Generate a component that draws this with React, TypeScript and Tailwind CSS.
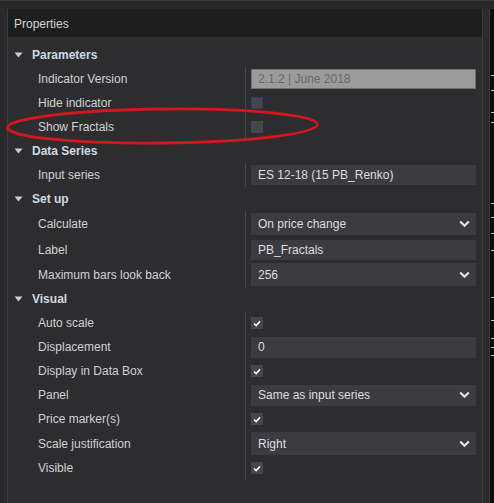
import React from "react";

type Row =
  | { kind: "section"; label: string; h: number }
  | { kind: "disabled"; label: string; value: string; h: number }
  | { kind: "check"; label: string; checked: boolean; focus?: boolean; h: number }
  | { kind: "input"; label: string; value: string; h: number; fh: number }
  | { kind: "select"; label: string; value: string; h: number; fh: number };

const rows: Row[] = [
  { kind: "section", label: "Parameters", h: 24 },
  { kind: "disabled", label: "Indicator Version", value: "2.1.2 | June 2018", h: 24 },
  { kind: "check", label: "Hide indicator", checked: false, focus: true, h: 24 },
  { kind: "check", label: "Show Fractals", checked: false, h: 24 },
  { kind: "section", label: "Data Series", h: 24 },
  { kind: "input", label: "Input series", value: "ES 12-18 (15 PB_Renko)", h: 24, fh: 20 },
  { kind: "section", label: "Set up", h: 24 },
  { kind: "select", label: "Calculate", value: "On price change", h: 26, fh: 22 },
  { kind: "input", label: "Label", value: "PB_Fractals", h: 25, fh: 20 },
  { kind: "select", label: "Maximum bars look back", value: "256", h: 25, fh: 23 },
  { kind: "section", label: "Visual", h: 24 },
  { kind: "check", label: "Auto scale", checked: true, h: 24 },
  { kind: "input", label: "Displacement", value: "0", h: 24, fh: 21 },
  { kind: "check", label: "Display in Data Box", checked: true, h: 24 },
  { kind: "select", label: "Panel", value: "Same as input series", h: 24, fh: 21 },
  { kind: "check", label: "Price marker(s)", checked: true, h: 24 },
  { kind: "select", label: "Scale justification", value: "Right", h: 25, fh: 23 },
  { kind: "check", label: "Visible", checked: true, h: 24 },
];

function Chevron() {
  return (
    <svg width="11" height="8" viewBox="0 0 11 8" className="shrink-0">
      <path d="M1.2 1.5 L5.5 5.8 L9.8 1.5" fill="none" stroke="#e4e4e4" strokeWidth="2.2" />
    </svg>
  );
}

function Check({ checked, focus }: { checked: boolean; focus?: boolean }) {
  return (
    <div
      className={
        focus
          ? "w-[12px] h-[12px] bg-[#45454b] border border-[#283a70] flex items-center justify-center"
          : "w-[12px] h-[12px] bg-[#45454b] flex items-center justify-center"
      }
    >
      {checked && (
        <svg width="8" height="7" viewBox="0 0 8 7">
          <path d="M1 3.6 L3.2 5.6 L7 1.4" fill="none" stroke="#f2f2f2" strokeWidth="1.6" />
        </svg>
      )}
    </div>
  );
}

function Value({ row }: { row: Row }) {
  if (row.kind === "disabled") {
    return (
      <div className="w-[225px] h-[20px] bg-[#9b9b9b] border border-[#717171] flex items-center pl-[6px] text-[#686868]">
        {row.value}
      </div>
    );
  }
  if (row.kind === "check") return <Check checked={row.checked} focus={row.focus} />;
  if (row.kind === "input") {
    return (
      <div
        className="w-[225px] bg-[#3b3b41] flex items-center pl-[7px] text-[#dedede]"
        style={{ height: row.fh }}
      >
        {row.value}
      </div>
    );
  }
  if (row.kind === "select") {
    return (
      <div
        className="w-[225px] bg-[#3b3b41] flex items-center justify-between pl-[7px] pr-[6px] text-[#dedede]"
        style={{ height: row.fh }}
      >
        <span>{row.value}</span>
        <Chevron />
      </div>
    );
  }
  return null;
}

function Triangle() {
  return (
    <svg width="9" height="6" viewBox="0 0 9 6" className="shrink-0">
      <path d="M0.5 0.5 L8.5 0.5 L4.5 5.5 Z" fill="#cfcfcf" />
    </svg>
  );
}

const ticks = [75, 90, 112, 122, 203, 217, 233, 250, 297, 320, 338, 347, 355];

export default function App() {
  return (
    <div
      className="relative w-[494px] h-[503px] overflow-hidden bg-[#29292b] flex flex-col text-[12px] leading-none"
      style={{ fontFamily: '"Liberation Sans", Arial, sans-serif' }}
    >
      <div className="h-[9px] shrink-0 border-t border-[#3a3a3c]" />
      <div className="flex flex-1 min-h-0">
        <div className="w-[7px] shrink-0" />
        <div className="w-[476px] shrink-0 flex flex-col border-l border-r border-[#3d3d40]">
          <div className="h-[28px] shrink-0 bg-[#1e1e1e] flex items-center pl-[6px] pt-px text-[#d4d4d4]">
            Properties
          </div>
          <div className="flex-1 bg-[#2d2d30] pt-[6px]">
            {rows.map((row, i) =>
              row.kind === "section" ? (
                <div key={i} className="flex items-center pl-[6px]" style={{ height: row.h }}>
                  <Triangle />
                  <span className="ml-[9px] font-bold text-[#d3d8e0]">{row.label}</span>
                </div>
              ) : (
                <div key={i} className="flex" style={{ height: row.h }}>
                  <div className="w-[238px] shrink-0 border-r border-[#45454a] flex items-center pl-[30px] text-[#d2d2d2]">
                    {row.label}
                  </div>
                  <div className="flex-1 flex items-center pl-[5px]">
                    <Value row={row} />
                  </div>
                </div>
              )
            )}
          </div>
        </div>
        <div className="w-[7px] shrink-0 bg-[#2c2c2e] border-r border-[#3a3a3c]" />
        <div className="flex-1 bg-[#0e0e0e]" />
      </div>

      {ticks.map((t) => (
        <div key={t} className="absolute left-[491px] w-[3px] h-px bg-[#bdbdbd]" style={{ top: t }} />
      ))}

      <svg className="absolute left-0 top-0 pointer-events-none" width="494" height="503">
        <ellipse
          cx="162.5"
          cy="126"
          rx="155"
          ry="17"
          fill="none"
          stroke="#d3171d"
          strokeWidth="2.8"
          transform="rotate(-0.6 162.5 126)"
        />
      </svg>
    </div>
  );
}
